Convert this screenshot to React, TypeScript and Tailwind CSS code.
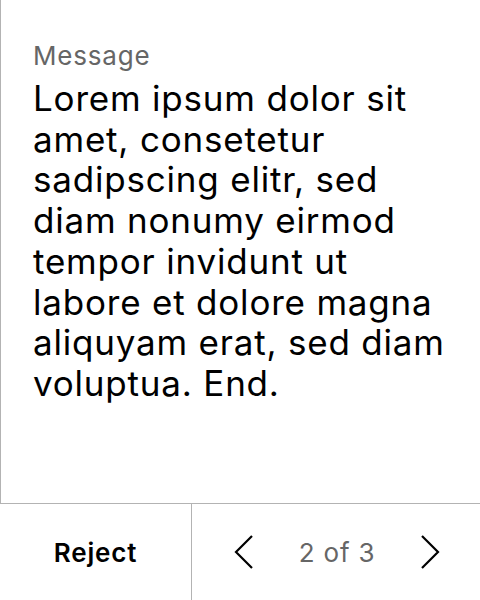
export default function App() {
  return (
    <div
      className="flex h-[600px] w-[480px] flex-col bg-white tracking-wider text-black"
      style={{ fontFamily: "Inter, 'Noto Sans', sans-serif" }}
    >
      {/* MESSAGE */}
      <div className="flex-1 border-b border-l border-[#b3b3b3] pl-[32px] pr-[28px] pt-[40px]">
        <div className="text-[26px] leading-[32px] text-[#666666]">Message</div>
        <p className="mt-[6px] text-[35px] leading-[40.7px]">
          Lorem ipsum dolor sit amet, consetetur sadipscing elitr, sed diam nonumy eirmod
          tempor invidunt ut labore et dolore magna aliquyam erat, sed diam voluptua. End.
        </p>
      </div>

      {/* ACTIONS */}
      <div className="flex h-[96px]">
        <button className="flex w-[192px] items-center justify-center border-r border-[#b3b3b3] text-[26px] font-semibold">
          Reject
        </button>
        <div className="flex flex-1 items-center justify-between pl-[42px] pr-[40px]">
          <button className="flex h-[40px] w-[20px] items-center justify-center">
            <svg width="20" height="34" viewBox="0 0 20 34" fill="none" stroke="black" strokeWidth="2.2">
              <path d="M18 1 L2 17 L18 33" />
            </svg>
          </button>
          <span className="text-[26px] text-[#666666]">2 of 3</span>
          <button className="flex h-[40px] w-[20px] items-center justify-center">
            <svg width="20" height="34" viewBox="0 0 20 34" fill="none" stroke="black" strokeWidth="2.2">
              <path d="M2 1 L18 17 L2 33" />
            </svg>
          </button>
        </div>
      </div>
    </div>
  );
}
